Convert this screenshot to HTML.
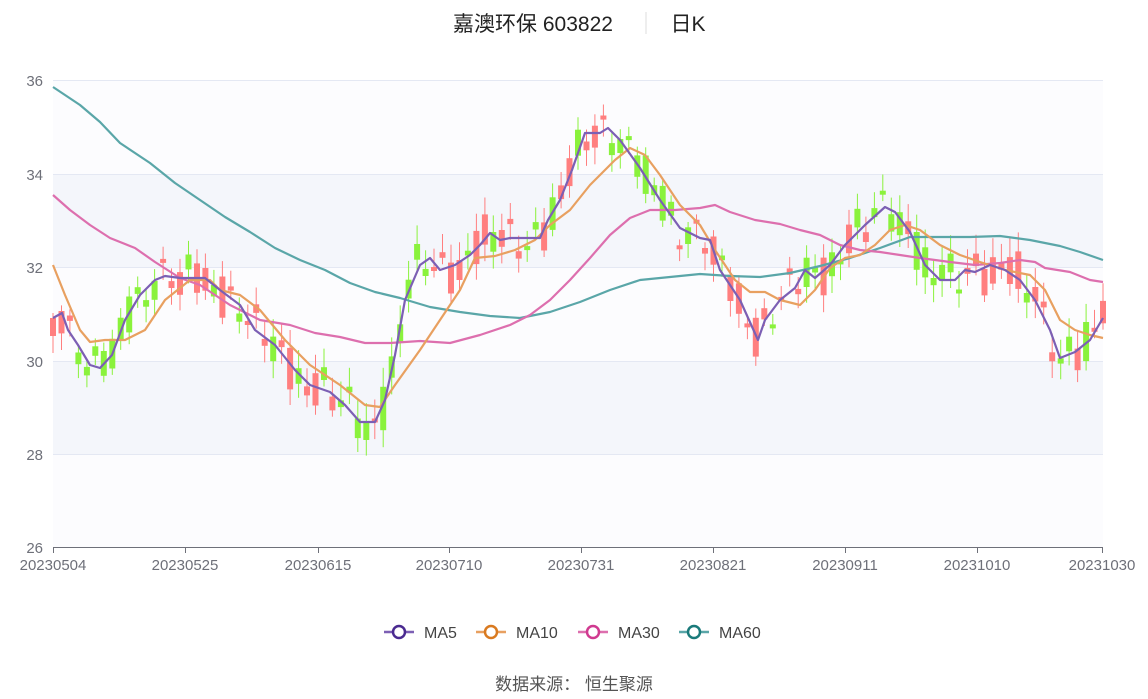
<!DOCTYPE html>
<html><head><meta charset="utf-8"><style>
html,body{margin:0;padding:0;background:#fff;width:1148px;height:699px;overflow:hidden}
svg text{font-family:"Liberation Sans","Noto Sans CJK SC",sans-serif}
</style></head><body>
<svg id="s" width="1148" height="699" xmlns="http://www.w3.org/2000/svg">
<rect x="53" y="80" width="1050" height="94" fill="#fcfcfe"/>
<rect x="53" y="174" width="1050" height="93" fill="#f4f6fb"/>
<rect x="53" y="267" width="1050" height="94" fill="#fcfcfe"/>
<rect x="53" y="361" width="1050" height="93" fill="#f4f6fb"/>
<rect x="53" y="454" width="1050" height="93" fill="#fcfcfe"/>
<g stroke="#e4e8f3" stroke-width="1">
<line x1="53" y1="80.5" x2="1103" y2="80.5"/><line x1="53" y1="174.5" x2="1103" y2="174.5"/>
<line x1="53" y1="267.5" x2="1103" y2="267.5"/><line x1="53" y1="361.5" x2="1103" y2="361.5"/>
<line x1="53" y1="454.5" x2="1103" y2="454.5"/></g>
<line x1="53" y1="547.5" x2="1103" y2="547.5" stroke="#6e7079"/>
<g stroke="#6e7079">
<line x1="53.5" y1="547" x2="53.5" y2="553"/><line x1="185.5" y1="547" x2="185.5" y2="553"/><line x1="318.5" y1="547" x2="318.5" y2="553"/><line x1="449.5" y1="547" x2="449.5" y2="553"/><line x1="581.5" y1="547" x2="581.5" y2="553"/><line x1="713.5" y1="547" x2="713.5" y2="553"/><line x1="845.5" y1="547" x2="845.5" y2="553"/><line x1="977.5" y1="547" x2="977.5" y2="553"/><line x1="1102.5" y1="547" x2="1102.5" y2="553"/></g>
<g fill="#6e7079" font-size="15" text-anchor="end">
<text x="43" y="86">36</text><text x="43" y="180">34</text><text x="43" y="273">32</text><text x="43" y="367">30</text><text x="43" y="460">28</text><text x="43" y="553">26</text></g>
<g fill="#6e7079" font-size="15" text-anchor="middle">
<text x="53" y="570">20230504</text><text x="185" y="570">20230525</text><text x="318" y="570">20230615</text><text x="449" y="570">20230710</text><text x="581" y="570">20230731</text><text x="713" y="570">20230821</text><text x="845" y="570">20230911</text><text x="977" y="570">20231010</text><text x="1102" y="570">20231030</text></g>
<g id="candles"></g>
<g fill="none" stroke-width="2.2" stroke-linejoin="round">
<polyline id="ma60" stroke="#5aa6a8" points="53,87 80,105 100,122 120,143 150,163 175,183 200,200 225,217 250,232 275,248 300,260 325,270 350,283 375,292 400,298 430,307 460,312 490,316 520,318 550,312 580,302 610,290 640,280 670,277 700,274 730,276 760,277 790,273 820,266 850,258 880,248 910,237 940,237 970,237 1000,236 1030,240 1060,246 1080,252 1103,260"/>
<polyline stroke="#dd6fae" points="53,195 70,210 90,225 110,238 135,248 155,262 180,278 200,285 230,305 260,320 290,325 315,333 340,337 365,343 390,343 420,341 450,343 480,335 510,325 530,315 550,300 570,280 590,258 610,235 630,218 650,210 675,210 700,208 715,205 730,212 755,220 780,224 800,230 820,235 840,245 860,250 880,252 900,255 920,258 950,262 975,265 1000,263 1020,260 1035,262 1045,268 1070,272 1090,280 1103,282"/>
<polyline stroke="#e8a060" points="53,265 65,295 80,330 90,342 105,340 125,340 145,330 165,300 190,280 210,280 220,290 240,295 260,310 285,340 310,365 340,385 365,405 380,407 395,385 420,350 440,320 460,290 475,258 495,256 515,250 535,240 550,225 570,210 590,185 615,160 630,148 645,155 660,175 680,205 700,225 715,250 735,280 750,292 765,292 780,300 800,305 815,290 830,268 845,258 860,255 875,245 890,230 905,225 920,230 940,245 960,255 980,262 1005,270 1030,275 1045,290 1060,320 1075,330 1090,335 1103,338"/>
<polyline id="ma5" stroke="#7c5fb4" points="53,318 62,313 68,330 78,345 90,365 100,368 112,355 125,320 140,295 155,280 165,276 180,278 205,278 220,290 240,305 255,330 275,345 295,370 310,385 330,392 345,405 360,422 375,422 385,400 395,355 405,300 420,265 430,258 440,270 455,265 470,255 480,245 490,233 500,240 510,238 530,238 540,238 548,220 560,200 572,170 585,133 600,133 608,128 620,140 640,168 660,200 680,228 700,238 710,240 720,270 740,300 758,340 765,320 780,300 795,288 805,270 815,278 830,265 845,245 865,225 885,207 895,212 910,232 925,265 940,280 955,280 965,270 975,272 990,265 1005,270 1020,280 1035,300 1050,330 1060,358 1075,352 1090,340 1103,318"/>
</g>
<text x="533" y="31" font-size="21" fill="#222" text-anchor="middle">嘉澳环保 603822</text>
<line x1="646" y1="12" x2="646" y2="34" stroke="#ddd"/>
<text x="688" y="31" font-size="21" fill="#222" text-anchor="middle">日K</text>
<g stroke-width="2.5" fill="#fff">
<line x1="384" y1="632" x2="414" y2="632" stroke="#7c5fb4"/><circle cx="399" cy="632" r="6" stroke="#4a2a90"/>
<line x1="476" y1="632" x2="506" y2="632" stroke="#e8a060"/><circle cx="491" cy="632" r="6" stroke="#d97a20"/>
<line x1="578" y1="632" x2="608" y2="632" stroke="#dd6fae"/><circle cx="593" cy="632" r="6" stroke="#d03a90"/>
<line x1="679" y1="632" x2="709" y2="632" stroke="#5aa6a8"/><circle cx="694" cy="632" r="6" stroke="#1a7a7a"/>
</g>
<g font-size="16" fill="#444"><text x="424" y="638">MA5</text><text x="516" y="638">MA10</text><text x="618" y="638">MA30</text><text x="719" y="638">MA60</text></g>
<text x="574" y="690" font-size="17" fill="#555" text-anchor="middle">数据来源：  恒生聚源</text>
</svg>
<script>
(function(){
var pts=document.getElementById('ma5').getAttribute('points').trim().split(/\s+/).map(function(p){return p.split(',').map(Number)});
function yAt(x){for(var i=1;i<pts.length;i++){if(x<=pts[i][0]){var a=pts[i-1],b=pts[i];return a[1]+(b[1]-a[1])*(x-a[0])/(b[0]-a[0]);}}return pts[pts.length-1][1];}
var g=document.getElementById('candles'),h='';
for(var i=0;i<125;i++){var x=53+i*1050/124;var c=yAt(x);
var n1=Math.sin(i*2.3)*20+Math.sin(i*0.7)*8,n2=Math.cos(i*1.7)*18;
var o=c+n1,cl=c+n2;var top=Math.min(o,cl),bot=Math.max(o,cl);if(bot-top<4)bot=top+4;
var up=(i*7%3)!=0?(cl<o):(cl>o);var col=up?'#ff7f7f':'#8af23c';
var hi=top-5-Math.abs(Math.sin(i*3.1))*14,lo=bot+5+Math.abs(Math.cos(i*2.9))*12;
h+='<line x1="'+x.toFixed(1)+'" x2="'+x.toFixed(1)+'" y1="'+hi.toFixed(1)+'" y2="'+lo.toFixed(1)+'" stroke="'+col+'" stroke-width="1"/>';
h+='<rect x="'+(x-3).toFixed(1)+'" y="'+top.toFixed(1)+'" width="6" height="'+(bot-top).toFixed(1)+'" fill="'+col+'"/>';}
g.innerHTML=h;})();
</script>
</body></html>
